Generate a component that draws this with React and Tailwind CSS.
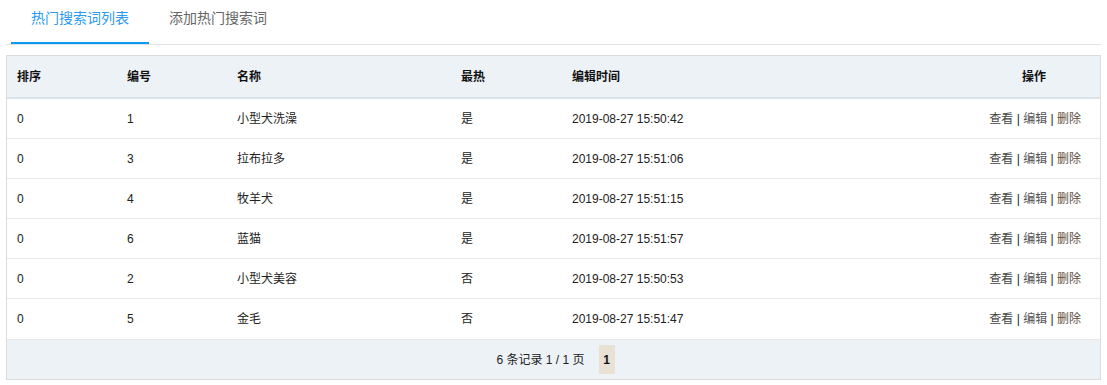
import React from "react";

const rows = [
  { sort: 0, id: 1, name: "小型犬洗澡", hot: "是", time: "2019-08-27 15:50:42" },
  { sort: 0, id: 3, name: "拉布拉多", hot: "是", time: "2019-08-27 15:51:06" },
  { sort: 0, id: 4, name: "牧羊犬", hot: "是", time: "2019-08-27 15:51:15" },
  { sort: 0, id: 6, name: "蓝猫", hot: "是", time: "2019-08-27 15:51:57" },
  { sort: 0, id: 2, name: "小型犬美容", hot: "否", time: "2019-08-27 15:50:53" },
  { sort: 0, id: 5, name: "金毛", hot: "否", time: "2019-08-27 15:51:47" },
];

const font = { fontFamily: '"Liberation Sans", Arial, "Noto Sans CJK SC", sans-serif' };

export default function App() {
  return (
    <div className="w-[1107px] h-[385px] bg-white text-[12px] text-[#222]" style={font}>
      {/* tabs */}
      <div className="mx-[6px] flex border-b border-[#e3e3e3] h-[45px]">
        <div className="ml-[5px] w-[138px] h-[44px] flex items-start justify-center pt-[8px] text-[14px] text-[#2b9af3] border-b-2 border-[#0b9bf6]">
          热门搜索词列表
        </div>
        <div className="w-[138px] flex items-start justify-center pt-[8px] text-[14px] text-[#666]">
          添加热门搜索词
        </div>
      </div>

      {/* table */}
      <div className="mx-[6px] mt-[10px] border-[1.5px] border-[#dcdcdc]">
        <div className="flex h-[43px] items-center bg-[#edf2f7] border-b-2 border-[#dae2ea] font-bold text-[#111]">
          <div className="w-[110px] pl-[10px]">排序</div>
          <div className="w-[110px] pl-[10px]">编号</div>
          <div className="w-[224px] pl-[10px]">名称</div>
          <div className="w-[111px] pl-[10px]">最热</div>
          <div className="w-[400px] pl-[10px]">编辑时间</div>
          <div className="flex-1 text-center pl-[6px]">操作</div>
        </div>
        {rows.map((r, i) => (
          <div
            key={i}
            className={"flex h-[40px] items-center " + (i < rows.length - 1 ? "border-b border-[#e8e8e8]" : "")}
          >
            <div className="w-[110px] pl-[10px]">{r.sort}</div>
            <div className="w-[110px] pl-[10px]">{r.id}</div>
            <div className="w-[224px] pl-[10px]">{r.name}</div>
            <div className="w-[111px] pl-[10px]">{r.hot}</div>
            <div className="w-[400px] pl-[10px]">{r.time}</div>
            <div className="flex-1 text-right pr-[19px] text-[#444]">
              <span>查看</span>
              <span className="text-[#222]"> | </span>
              <span className="text-[#555]">编辑</span>
              <span className="text-[#222]"> | </span>
              <span className="text-[#5f5040]">删除</span>
            </div>
          </div>
        ))}
        <div className="flex h-[40px] items-center justify-center bg-[#edf2f7] border-t border-[#e8e8e8] text-[#222]">
          <span className="ml-[4px]">6 条记录 1 / 1 页</span>
          <span className="ml-[14px] w-[16px] h-[29px] flex items-center justify-center bg-[#e8e1d4] font-bold text-[#111]">
            1
          </span>
        </div>
      </div>
    </div>
  );
}
